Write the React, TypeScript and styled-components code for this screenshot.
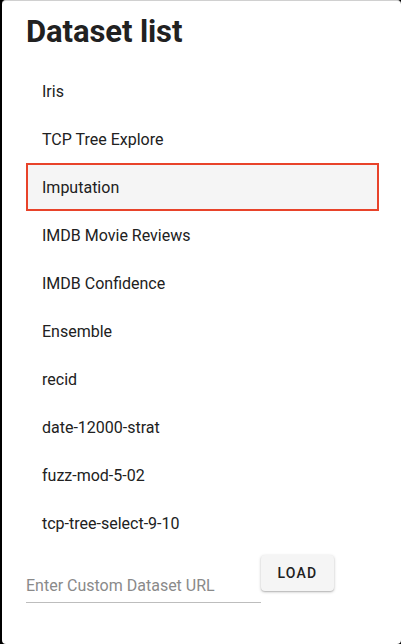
import React, { useState } from "react";
import styled, { createGlobalStyle } from "styled-components";

const GlobalStyle = createGlobalStyle`
  html, body {
    margin: 0;
    padding: 0;
    background: #000;
    font-family: Roboto, "Liberation Sans", sans-serif;
  }
`;

const datasets = [
  "Iris",
  "TCP Tree Explore",
  "Imputation",
  "IMDB Movie Reviews",
  "IMDB Confidence",
  "Ensemble",
  "recid",
  "date-12000-strat",
  "fuzz-mod-5-02",
  "tcp-tree-select-9-10",
];

const Panel = styled.div`
  box-sizing: border-box;
  margin-left: 2px;
  width: 399px;
  height: 644px;
  background: #fff;
  border-radius: 4px;
  border-top: 1px solid #d0d0d0;
  padding: 0 22px 0 24px;
  display: flex;
  flex-direction: column;
`;

const Title = styled.h1`
  margin: 0;
  padding-top: 13px;
  font-size: 31px;
  line-height: 36px;
  font-weight: 700;
  color: #212121;
  letter-spacing: -0.1px;
`;

const List = styled.ul`
  list-style: none;
  margin: 17px 0 0;
  padding: 0;
  display: flex;
  flex-direction: column;
`;

const Item = styled.li<{ $selected?: boolean }>`
  box-sizing: border-box;
  height: 48px;
  display: flex;
  align-items: center;
  padding-left: 14px;
  font-size: 16px;
  color: #212121;
  cursor: pointer;
  border: 2px solid ${({ $selected }) => ($selected ? "#e8432a" : "transparent")};
  background: ${({ $selected }) => ($selected ? "#f5f5f5" : "transparent")};
`;

const Footer = styled.div`
  display: flex;
  align-items: flex-start;
  margin-top: 8px;
`;

const UrlInput = styled.input`
  box-sizing: border-box;
  width: 235px;
  margin-top: 18px;
  height: 30px;
  border: none;
  border-bottom: 1px solid #bdbdbd;
  outline: none;
  padding: 0 0 4px;
  font-family: inherit;
  font-size: 16px;
  color: #212121;
  background: transparent;
  &::placeholder {
    color: #8a8a8a;
  }
`;

const LoadButton = styled.button`
  box-sizing: border-box;
  width: 73px;
  height: 36px;
  border: none;
  border-radius: 4px;
  background: #f5f5f5;
  box-shadow: 0 1px 3px rgba(0, 0, 0, 0.25), 0 1px 1px rgba(0, 0, 0, 0.1);
  font-family: inherit;
  font-size: 14px;
  font-weight: 500;
  letter-spacing: 1.25px;
  color: #212121;
  text-transform: uppercase;
  cursor: pointer;
`;

export default function App() {
  const [selected, setSelected] = useState("Imputation");
  return (
    <>
      <GlobalStyle />
      <Panel>
        <Title>Dataset list</Title>
        <List>
          {datasets.map((name) => (
            <Item
              key={name}
              $selected={name === selected}
              onClick={() => setSelected(name)}
            >
              {name}
            </Item>
          ))}
        </List>
        <Footer>
          <UrlInput placeholder="Enter Custom Dataset URL" />
          <LoadButton>Load</LoadButton>
        </Footer>
      </Panel>
    </>
  );
}
